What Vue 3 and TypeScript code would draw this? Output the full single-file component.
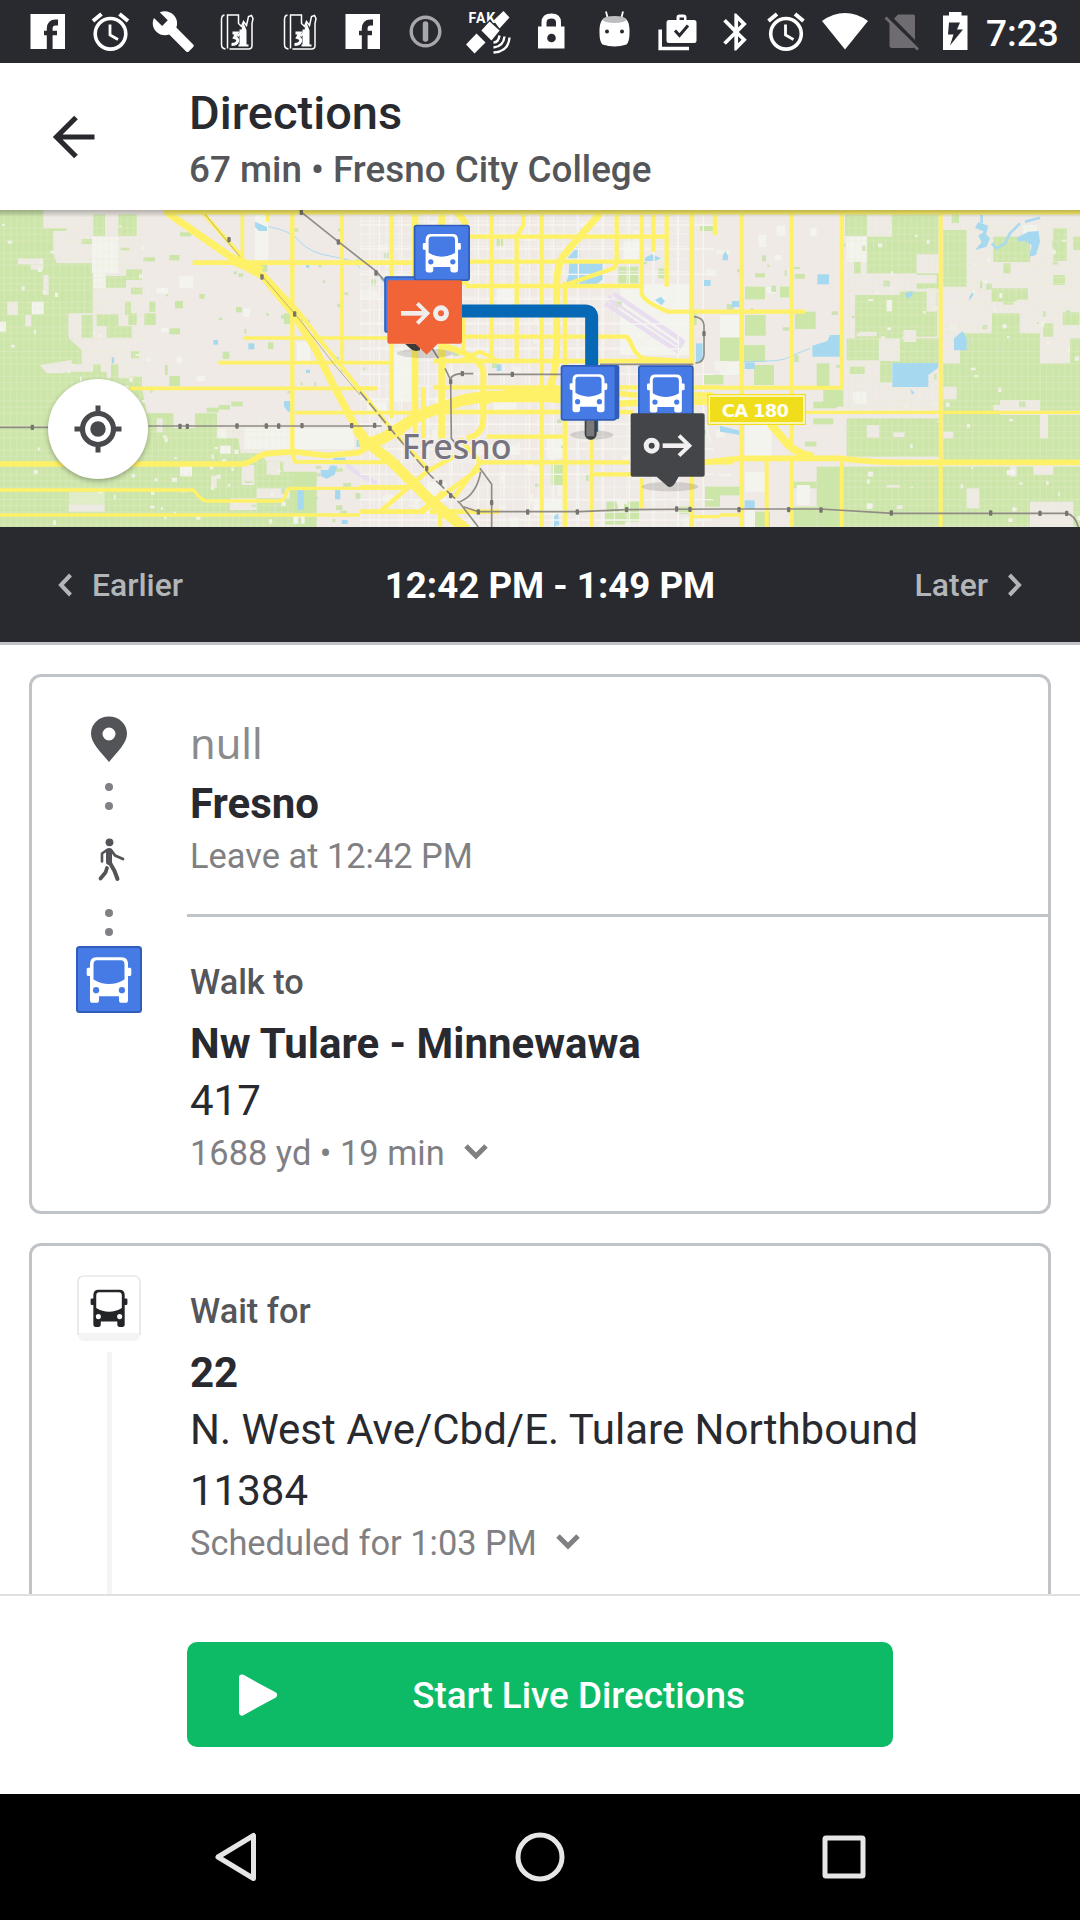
<script setup lang="ts">
type Box = [number, number, number, number]
type Road = { d: string; w: number }

const busPath =
  'M20 11H46Q51.5 11 52 17V21.5H54Q55.3 21.5 55.3 23V28Q55.3 29.5 53.7 29.5H52V53.5Q52 56 49.5 56H45.5Q43 56 43 53.5V49.5H23V53.5Q23 56 20.5 56H16.5Q14 56 14 53.5V29.5H12.3Q10.7 29.5 10.7 28V23Q10.7 21.5 12 21.5H14V17Q14.5 11 20 11ZM21 14Q17.7 14 17.5 18V33Q25 37.5 33 37.5Q41 37.5 48.5 33V18Q48.3 14 45 14ZM17 43.5a3.1 3.1 0 1 0 6.2 0a3.1 3.1 0 1 0-6.2 0ZM42.8 43.5a3.1 3.1 0 1 0 6.2 0a3.1 3.1 0 1 0-6.2 0Z'

// Farmland, three grid units per pixel
const fields: Box[] = [
  [280, 28, 35, 65], [355, 28, 55, 65], [245, 102, 32, 15], [430, 157, 35, 12], [318, 213, 60, 35], [378, 193, 48, 32],
  [393, 248, 34, 20], [375, 290, 18, 40], [290, 328, 65, 35], [320, 363, 75, 35], [385, 325, 25, 35], [448, 290, 18, 30],
  [433, 325, 34, 35], [245, 330, 33, 68], [508, 370, 32, 18], [525, 288, 24, 22], [598, 267, 16, 14], [708, 306, 18, 16],
  [393, 438, 24, 22], [508, 513, 32, 30], [388, 515, 38, 30], [280, 478, 22, 44], [333, 478, 22, 44], [495, 480, 8, 30],
  [668, 440, 20, 22], [804, 412, 16, 20], [620, 608, 36, 14], [656, 600, 34, 14], [694, 590, 34, 14], [852, 325, 28, 32],
  [778, 180, 24, 20], [540, 82, 34, 12], [585, 625, 66, 50], [508, 150, 30, 16], [362, 128, 26, 8],
  [1855, 185, 60, 50], [1990, 320, 100, 40], [1975, 190, 22, 30], [1652, 780, 40, 60], [1820, 890, 100, 60], [2115, 845, 45, 60],
  [2110, 510, 60, 28], [2100, 62, 40, 16], [1490, 100, 22, 26], [1815, 920, 60, 40], [2030, 905, 46, 22],
  [2235, 245, 60, 38], [2340, 245, 28, 32], [2235, 330, 62, 62], [2385, 320, 62, 52], [2160, 398, 64, 70], [2225, 420, 70, 50],
  [2262, 480, 60, 60], [2450, 475, 38, 70], [2440, 590, 70, 20], [2470, 555, 60, 50], [2535, 28, 66, 65], [2562, 170, 20, 35],
  [2675, 28, 140, 120], [2600, 95, 150, 110], [2750, 205, 70, 46], [2830, 75, 70, 170], [2980, 95, 110, 76], [3160, 70, 40, 98],
  [3220, 95, 20, 40], [2975, 250, 75, 40], [3050, 250, 34, 34], [2565, 270, 140, 130], [2700, 260, 112, 135], [2540, 400, 96, 66],
  [2640, 400, 176, 75], [2975, 325, 84, 75], [2880, 385, 240, 92], [2830, 475, 410, 110], [3210, 400, 30, 76], [3130, 355, 30, 40],
  [3160, 210, 35, 30], [2830, 630, 410, 135], [2540, 640, 280, 115], [2830, 570, 170, 60], [3120, 575, 120, 42], [2450, 785, 790, 180],
  [2380, 830, 70, 20], [2160, 845, 60, 26], [2260, 920, 50, 45], [2380, 905, 70, 60], [3188, 322, 50, 38], [2855, 28, 22, 26],
  [2440, 640, 60, 18], [2415, 710, 34, 14], [2550, 485, 44, 22], [3010, 175, 22, 30], [3010, 285, 30, 14], [2265, 205, 30, 12],
  [2385, 207, 30, 14], [2640, 470, 36, 62],
]
// Bare ground inside the farmland
const ground: Box[] = [
  [54, 160, 76, 18], [92, 178, 38, 16], [22, 290, 32, 40], [76, 330, 18, 34], [130, 210, 16, 60], [206, 328, 36, 62],
  [206, 898, 108, 22], [634, 812, 16, 38], [725, 780, 38, 60], [800, 770, 40, 40], [470, 640, 18, 42], [770, 850, 100, 30],
  [690, 880, 80, 35], [2630, 50, 46, 44], [2750, 150, 56, 44], [2630, 210, 180, 24], [2640, 400, 60, 68], [2710, 375, 38, 36],
  [2600, 660, 38, 38], [2830, 545, 40, 38], [2900, 325, 76, 52], [2680, 682, 34, 14], [2900, 850, 38, 60], [3030, 780, 20, 35],
  [3090, 890, 130, 76], [3100, 780, 60, 30], [2830, 680, 30, 20], [3120, 630, 24, 70], [2780, 250, 30, 70], [2980, 600, 40, 16],
  [2660, 840, 40, 8], [2740, 552, 80, 34], [2570, 380, 60, 14], [2690, 900, 18, 12],
]
const pale: Box[] = [
  [276, 96, 78, 108], [280, 205, 36, 44], [538, 212, 42, 38], [95, 290, 36, 38], [0, 350, 18, 30], [470, 248, 34, 18],
  [765, 28, 40, 150], [540, 780, 36, 34], [654, 672, 26, 28], [660, 722, 32, 24], [732, 670, 330, 62], [530, 455, 14, 20],
  [590, 512, 26, 16], [484, 368, 22, 14], [880, 930, 34, 26], [890, 410, 40, 70], [730, 310, 20, 26],
  [1290, 50, 20, 40], [1490, 250, 60, 60], [1870, 110, 50, 60], [1860, 240, 220, 210], [1180, 440, 60, 150], [1380, 720, 180, 30],
  [1480, 590, 70, 30], [1640, 700, 50, 60], [1750, 540, 60, 90], [1600, 880, 100, 50], [1280, 830, 60, 60], [2160, 330, 62, 66],
  [2160, 470, 60, 40], [2540, 95, 60, 75], [2275, 90, 24, 36], [2330, 62, 26, 30], [2300, 245, 32, 20], [2325, 150, 20, 16],
  [2235, 650, 80, 110], [2430, 70, 20, 24], [2235, 800, 60, 60], [2390, 840, 40, 60], [2560, 560, 40, 36], [2660, 285, 16, 34],
  [2600, 895, 18, 16], [3020, 795, 26, 16], [2235, 900, 30, 66], [3070, 60, 40, 36], [1100, 590, 60, 40], [1200, 250, 40, 20],
]
const water = [
  'M765 50l36 16v12h-24l-12-12z', 'M745 415h18v18h-18z', 'M640 405h14v14h-14z', 'M335 457h7v18h-7z', 'M852 588h20v32h-8l-12-16z',
  'M893 856h18v58h-18z', 'M1005 855h16v28h-16z', 'M962 795l22 0 8-14 20 2-8 26-24 12-18-8z', 'M1000 758h36v8h-36z',
  'M1708 172h104v48l-22 18h-92l8-30z', 'M1738 118v42h-36z', 'M1935 158l20-10 28 12-18 8-30 0z', 'M1965 285l18-10 12 14-10 12z',
  'M1490 478h14v20h-14z', 'M1660 935l14-10 4 34-16 6z', 'M2088 415h22v55h-22z', 'M2110 225h22v18h-22z', 'M1080 705l14-14v40h-14z',
  'M2168 152l8-14 8 14v14h-16z', 'M2452 208h35v30h-35z', 'M2196 288h26v18h-26z', 'M2437 422l45-14 8-18h32v65h-85z', 'M2234 472h30v20h-30z',
  'M2677 474h138l0 14-30 22 0 36H2677z', 'M2715 265l26-6-6 14-14 10z', 'M2862 400l26-22 12 22v36h-38z', 'M2160 662l62 16v12l-62-10z',
  'M2234 886h30v26h-30z', 'M2730 552l8 6 6 6-8 4z', 'M918 178h10v10h-10zM918 494h12v10h-12zM1002 456h14v10h-14z', 'M1070 705h14v20h-14z',
  'M1025 945h18v12h-18z', 'M2908 275l10-14 2 8-12 20z',
  'M3050 98L3085 80L3115 78L3120 110L3108 150L3088 155L3095 120L3075 108L3055 110Z', 'M2935 52L2965 62L2958 88L2970 100L2960 125L2925 135L2945 112L2935 92L2952 80L2925 68Z',
]
const roads: Road[] = [
  { w: 15, d: 'M490 21H3240' },
  { w: 22, d: 'M500 22L720 175L790 215L880 325L945 430L1000 540L1080 690' },
  { w: 32, d: 'M1070 670L1100 712L1170 765L1290 885L1400 975' },
  { w: 12, d: 'M610 25L725 155M790 205L900 325L960 405L1080 555L1180 680L1290 800' },
  { w: 32, d: 'M690 160L785 200' },
  { w: 13, d: 'M877 22V750' },
  { w: 11, d: 'M727 22V160M803 25V50M1026 30V470' },
  { w: 14, d: 'M578 173H1240' },
  { w: 11, d: 'M730 399H1170M655 473H1180M390 550H1130M885 623H1280' },
  { w: 17, d: 'M0 777H730C760 770 775 750 800 746L880 740L980 752L1080 742L1110 720' },
  { w: 12, d: 'M877 740L885 770L1080 772H1200' },
  { w: 10, d: 'M0 855H580C595 870 600 886 620 888H845C860 880 855 855 870 850H1230M0 930H1080M1080 920H1270' },
  { w: 13, d: 'M1175 30V640M1475 30V465M1625 30V965M1695 230V320M1695 240L1840 190Q1850 180 1850 165V30M1570 30V60L1550 95V465M1695 640V965M1925 30V265Q1930 290 2005 320H2415M2000 30V245M2145 30V90M1960 30V140M1925 820V910' },
  { w: 20, d: 'M1245 30V225M1245 400V640M1325 30V700M1370 22L1395 50V240' },
  { w: 13, d: 'M1395 95H2000M1395 170H1925M1395 243H1925M1390 318H1500M1380 395H1880C1900 410 1890 440 1930 460L2080 470M1300 468H2080M1300 547H2160' },
  { w: 21, d: 'M1800 25L1700 140Q1670 170 1670 240V440Q1665 520 1640 570' },
  { w: 34, d: 'M1080 725L1150 700L1260 630L1380 588Q1440 572 1520 575H1640L1780 548' },
  { w: 20, d: 'M1640 580L1800 600L1960 590L2160 590' },
  { w: 16, d: 'M1440 600L1520 560L1740 552L1900 570H2140' },
  { w: 13, d: 'M1270 621H1900M1270 547V700M1245 600V700M1460 695H1690M1440 772H1890M2110 772H2200M1775 700V808H1925M1695 240V965M1775 808V965' },
  { w: 18, d: 'M1320 420Q1440 450 1450 500V640Q1450 690 1400 700' },
  { w: 12, d: 'M1380 468L1440 440L1500 470M1390 320V440M1200 690L1240 640L1320 600M1080 550H1130' },
  { w: 14, d: 'M1140 920L1280 800L1370 750M1260 920L1440 790M1080 847H1230M1080 920H1270L1330 860M1290 920H1500M1380 700L1440 772L1360 880M1320 920V965' },
  { w: 15, d: 'M2075 22V965' },
  { w: 14, d: 'M2225 22V965' },
  { w: 12, d: 'M2375 22V740M2375 765V965M2525 28V548H2160M2525 770V965M2822 22V965M2300 765V965' },
  { w: 10, d: 'M2400 622H3240M2160 930H2225M2075 935H2160' },
  { w: 17, d: 'M2110 772L2225 760H2400L2520 760Q2620 772 2700 772H3240' },
  { w: 24, d: 'M2310 655L2365 720Q2390 745 2440 756' },
]
const streets: string[] = [
  'M1080 60H2140M1080 132H2140M1080 208H2140M1080 282H1840M1080 357H2070M1080 432H2070M1080 508H2140M1080 584H2140M1080 658H2140M1080 732H2140M1080 808H2140M1080 884H2140M1080 945H2140',
  'M1110 28V965M1138 28V965M1205 28V965M1285 28V965M1355 28V965M1435 28V965M1512 28V965M1588 28V965M1660 28V965M1735 28V965M1810 28V965M1888 28V240M1888 460V965M1962 28V240M1962 460V965M2035 28V965M2110 28V965',
]
const rails: string[] = [
  'M0 667H280M445 663H1145', 'M902 20L1015 110L1130 200L1160 235', 'M1290 420L1315 460M1335 490L1352 525L1354 700L1390 745M1440 790L1475 838V966',
  'M1350 530Q1350 508 1385 506H1420M1464 508H1690M1800 478H2080', 'M1380 895L1435 966', 'M1380 890Q1430 870 1442 800',
  'M1390 905L1435 920H1740L1880 914L2160 912H2460L2680 925H3200Q3225 930 3235 966', 'M2082 335Q2110 338 2112 360V450Q2110 474 2086 474',
]
const stations: [number, number][] = [
  [97, 667], [540, 664], [562, 664], [711, 663], [799, 663], [836, 663], [906, 662], [1055, 662], [904, 22], [1015, 111], [687, 104],
  [786, 216], [884, 327], [1128, 204], [1352, 530], [1387, 506], [1537, 508], [1124, 661], [1170, 670], [1280, 790], [1322, 832],
  [1352, 872], [1435, 921], [1583, 921], [1732, 921], [1880, 914], [2030, 912], [2070, 913], [2217, 914], [2366, 914], [2463, 915],
  [2674, 924], [2972, 924], [3120, 925], [3200, 925], [2112, 386], [1475, 893],
]

// Scattered parks and lots, placed by a fixed-seed generator
function scatter(count: number, seed: number, area: Box, size: number): Box[] {
  let s = seed
  const next = () => ((s = (s * 16807) % 2147483647) / 2147483647)
  return Array.from({ length: count }, () => [
    Math.round(area[0] + next() * area[2]),
    Math.round(area[1] + next() * area[3]),
    Math.round(5 + next() * size),
    Math.round(5 + next() * size),
  ] as Box)
}
const lots: Box[] = [...scatter(45, 71, [0, 40, 440, 920], 10), ...scatter(30, 29, [450, 690, 400, 260], 10), ...scatter(50, 113, [2600, 80, 640, 860], 10), ...scatter(90, 17, [1080, 40, 1080, 900], 34)]
const parks: Box[] = [...scatter(24, 7, [450, 40, 620, 560], 10), ...scatter(45, 41, [2180, 100, 1040, 500], 16), ...scatter(22, 57, [1090, 40, 1050, 900], 16), ...scatter(22, 91, [730, 780, 340, 170], 18)]
</script>

<template>
  <div class="screen">
    <header class="status">
      <svg class="cell" viewBox="-31.5 -31.5 63 63"><use href="#i-fb" /></svg>
      <svg class="cell" viewBox="-31.5 -31.5 63 63"><use href="#i-alarm" /></svg>
      <svg class="cell" viewBox="-31.5 -31.5 63 63">
        <path transform="translate(-22.5 -22.3) scale(1.86)" fill="#fff" d="M22.7 19l-9.1-9.1c.9-2.3.4-5-1.5-6.9-2-2-5-2.4-7.4-1.3L9 6 6 9 1.6 4.7C.4 7.1.9 10.1 2.9 12.1c1.9 1.9 4.6 2.4 6.9 1.5l9.1 9.1c.4.4 1 .4 1.4 0l2.3-2.3c.5-.4.5-1.1.1-1.4z" />
      </svg>
      <svg class="cell" viewBox="-31.5 -31.5 63 63"><use href="#i-book" /></svg>
      <svg class="cell" viewBox="-31.5 -31.5 63 63"><use href="#i-book" /></svg>
      <svg class="cell" viewBox="-31.5 -31.5 63 63"><use href="#i-fb" /></svg>
      <svg class="cell" viewBox="-31.5 -31.5 63 63" fill="none" stroke="#a8a8ab">
        <circle r="14.3" stroke-width="3.4" /><path d="M0 -7.5V7.5" stroke-width="5.5" stroke-linecap="round" />
      </svg>
      <svg class="cell" viewBox="-31.5 -31.5 63 63">
        <text x="-20" y="-8.500" class="fake">FAK</text>
        <g fill="#fff">
          <path d="M5 -11L15 -20.500L21 -14L11 -3Z" /><path d="M-8 -1L1 -11L12 -1L3 10Z" /><path d="M-22.500 13L-12 2L-3 11L-14 22Z" />
          <path d="M-8 -1L1 -11L12 -1L3 10Z" fill="none" stroke="#292a2f" stroke-width="1.200" />
        </g>
        <path d="M5 11Q10 11 11 4M5 16Q15 15 16 5M5 21Q20 20 21 6" fill="none" stroke="#fff" stroke-width="2.400" />
      </svg>
      <svg class="cell" viewBox="-31.5 -31.5 63 63">
        <path d="M-7.500 -4V-9Q-7.500 -15.500 0 -15.500Q7 -15.500 7 -9V-4" fill="none" stroke="#fff" stroke-width="5" />
        <rect x="-13.500" y="-5" width="26.500" height="22" fill="#fff" /><circle cy="6.500" r="4.300" fill="#292a2f" />
      </svg>
      <svg class="cell" viewBox="-31.5 -31.5 63 63">
        <path d="M-8.500 -20L-6.500 -12M8.500 -20L6.500 -12" stroke="#fff" stroke-width="1.800" />
        <path d="M-12 -12H12Q15.500 -8 15 2Q15 10 12 13Q0 17 -12 13Q-15 10 -15 2Q-15.500 -8 -12 -12Z" fill="#fff" />
        <ellipse cy="-12" rx="12" ry="3.500" fill="#bdbdbf" /><circle cx="-7.500" cy="0" r="2" fill="#292a2f" /><circle cx="7.500" cy="0" r="2" fill="#292a2f" />
      </svg>
      <svg class="cell" viewBox="-31.5 -31.5 63 63">
        <path d="M-17.300 -2V17H11.500" fill="none" stroke="#fff" stroke-width="3.600" />
        <path d="M-9 -11.500H-1V-14Q-1 -17 2 -17H6Q9 -17 9 -14V-11.500H16.500Q19 -11.500 19 -9V9Q19 11.500 16.500 11.500H-8.500Q-11 11.500 -11 9V-9Q-11 -11.500 -9 -11.500ZM2 -11.500H6.500V-14H2Z" fill="#fff" fill-rule="evenodd" />
        <path d="M-2.500 -1L2 4L10.500 -6" fill="none" stroke="#292a2f" stroke-width="3" />
      </svg>
      <svg class="cell c52" viewBox="-26 -31.5 52 63">
        <path transform="translate(-21 -21.800) scale(1.850)" fill="#fff" d="M17.71 7.71L12 2h-1v7.59L6.41 5 5 6.41 10.59 12 5 17.59 6.41 19 11 14.41V22h1l5.71-5.71-4.3-4.29 4.3-4.29zM13 5.83l1.88 1.88L13 9.59V5.83zm1.88 10.460L13 18.170v-3.760l1.880 1.880z" />
      </svg>
      <svg class="cell c50" viewBox="-25 -31.5 50 63"><use href="#i-alarm" /></svg>
      <svg class="cell c68" viewBox="-34 -31.5 68 63"><path d="M0 18L-23 -10.500Q-12 -18.500 0 -18.500Q12 -18.500 23 -10.500Z" fill="#fff" /></svg>
      <svg class="cell c46" viewBox="-23 -31.5 46 63">
        <path d="M-4 -17H11Q13 -17 13 -15V14Q13 16.500 11 16.500H-10Q-12.500 16.500 -12.500 14V-8Z" fill="#6e6c71" />
        <path d="M-14 -16L18 16.500" stroke="#292a2f" stroke-width="4" /><path d="M-16.500 -14L16 18" stroke="#6e6c71" stroke-width="3" />
      </svg>
      <svg class="cell c60" viewBox="-30 -31.5 60 63">
        <path d="M-6 -19.500H6.500V-16H12.500V18.500H-12V-16H-6Z" fill="#fff" /><path d="M-6 -9H5L2 -2H8L-5 14L-1.500 3H-7Z" fill="#292a2f" />
      </svg>
      <span class="clock">7:23</span>
    </header>

    <svg class="defs" width="0" height="0">
      <defs>
        <g id="i-fb"><rect x="-17" y="-17.500" width="34.500" height="35" fill="#fff" /><path d="M10.500 -9H8Q2.200 -9 2.200 -3V17.500" fill="none" stroke="#292a2f" stroke-width="5.800" /><path d="M-3.500 1.500H9.500" stroke="#292a2f" stroke-width="4.500" /></g>
        <g id="i-alarm" fill="none" stroke="#fff"><circle cy="2.300" r="15.300" stroke-width="3.600" /><path d="M-.500 -7V3.500L7.500 8" stroke-width="2.800" /><path d="M-17.500 -10.500L-9 -17.500M17.500 -10.500L9 -17.500" stroke-width="4" /></g>
        <g id="i-book" fill="none" stroke="#fff" stroke-width="1.500">
          <path d="M-12 -16.500Q-15 -16 -15 -12V13Q-15 17 -11 17.500M-9 17V-16.500H2V-8L5 -5L7 -10L10 -6L12 -15L15 -16L16.500 -13L15.500 -8V14Q15.500 17.500 12 17.500H-7" />
          <path d="M4 13.500V-1H6L7 -6L9 -1V13.500Z" fill="#fff" stroke-width="2" /><path d="M2 14H12M1 5L5 0" stroke-width="2" /><path d="M-4 1.500H.500L-2 6Q2 7 1 10T-5 13" stroke-width="3" />
        </g>
        <g id="bus"><rect x="1" y="1" width="64" height="64" rx="2.500" fill="#467ae4" stroke="#315dba" stroke-width="2" /><path :d="busPath" fill="#fff" fill-rule="evenodd" /></g>
      </defs>
    </svg>

    <section class="toolbar">
      <div class="back">
        <svg width="44" height="44" viewBox="0 0 44 44" fill="none" stroke="#292a2f" stroke-width="5.200"><path d="M24 2.500L4.500 22L24 41.500M5 22H42.500" /></svg>
      </div>
      <div class="heading">
        <h1>Directions</h1>
        <p>67 min • Fresno City College</p>
      </div>
    </section>

    <section class="map">
      <svg class="canvas" viewBox="0 15 3240 951" preserveAspectRatio="none">
        <defs>
          <pattern id="plots" width="74" height="74" patternUnits="userSpaceOnUse"><path d="M12 0V74M31 0V74M50 0V74M68 0V74M0 14H74M0 33H74M0 70H74" stroke="#e5efcf" stroke-width="1.300" /></pattern>
          <pattern id="blocks" width="38" height="38" patternUnits="userSpaceOnUse"><path d="M0 10H38M19 0V38" stroke="#f5f3f0" stroke-width="2.500" /></pattern>
          <linearGradient id="shade" x1="0" y1="0" x2="0" y2="1"><stop offset="0" stop-color="#000" stop-opacity=".250" /><stop offset="1" stop-color="#000" stop-opacity="0" /></linearGradient>
        </defs>
        <rect y="15" width="3240" height="951" fill="#efeae6" />
        <g fill="#cce5a8">
          <path d="M0 15H130V70H200V78H160V145L170 175H278V325H206V400L245 435V478H205L170 500H320V520H425V545L440 625H520V670H650V700H715L722 745H780L800 770H850V800H950V966H0Z" />
          <rect v-for="(b, i) in fields" :key="i" :x="b[0]" :y="b[1]" :width="b[2]" :height="b[3]" />
        </g>
        <rect x="206" y="860" width="108" height="38" fill="#dfedc6" />
        <g fill="#efeae6">
          <path d="M120 480L215 465V495L190 505H140Z" />
          <rect v-for="(b, i) in ground" :key="i" :x="b[0]" :y="b[1]" :width="b[2]" :height="b[3]" />
        </g>
        <g fill="#f4f4ef"><rect v-for="(b, i) in pale" :key="i" :x="b[0]" :y="b[1]" :width="b[2]" :height="b[3]" /></g>
        <g fill="#f2f2ea"><rect v-for="(b, i) in lots" :key="i" :x="b[0]" :y="b[1]" :width="b[2]" :height="b[3]" /></g>
        <g fill="#cde3b3"><rect v-for="(b, i) in parks" :key="i" :x="b[0]" :y="b[1]" :width="b[2]" :height="b[3]" /></g>
        <rect x="0" y="15" width="440" height="951" fill="url(#plots)" />
        <rect x="440" y="640" width="440" height="326" fill="url(#plots)" />
        <rect x="2530" y="15" width="710" height="951" fill="url(#plots)" />
        <rect x="1080" y="15" width="1000" height="951" fill="url(#blocks)" />
        <g fill="#a6d9f0"><path v-for="d in water" :key="d" :d="d" /></g>
        <g fill="none" stroke="#a9daf0">
          <path d="M805 65Q870 75 900 110T1000 155T1080 190" stroke-width="3" /><path d="M1130 205L1158 235M1550 395V465" stroke-width="7" />
          <path d="M2975 115L2990 130L3015 115L3030 85L3060 55M3075 50L3120 38M2945 30V55" stroke-width="8" />
          <path d="M2220 470Q2340 470 2360 460T2430 430" stroke-width="3" />
        </g>
        <g fill="none" stroke="#e9deef" stroke-width="14"><path d="M1840 265L2050 410M1815 295L2035 440M1825 275L1845 300M2050 405L2030 440" /><path d="M1828 282L2040 425" stroke-width="8" /><path d="M1080 810L1130 835M1040 780L1080 810" /></g>
        <g fill="none" stroke="#f7f5f1" stroke-width="4"><path v-for="d in streets" :key="d" :d="d" /></g>
        <g fill="none" stroke="#fef168" stroke-linejoin="round"><path v-for="r in roads" :key="r.d" :d="r.d" :stroke-width="r.w" /></g>
        <g fill="none" stroke="#908c85">
          <path v-for="d in rails" :key="d" :d="d" stroke-width="5" />
          <path d="M615 28L720 155M780 205L900 345L1000 475L1080 570" stroke-width="2.500" stroke="#b5a566" />
          <path d="M1080 560L1170 670L1290 810L1380 895" stroke-width="5" stroke-dasharray="34 10" />
        </g>
        <g fill="#77746f"><rect v-for="(p, i) in stations" :key="i" :x="p[0] - 5" :y="p[1] - 8" width="10" height="16" rx="3" /></g>
        <text x="1205" y="763" class="city">Fresno</text>
        <g><rect x="2122" y="567" width="296" height="93" fill="#f0dd1b" /><rect x="2128" y="573" width="284" height="81" fill="#f0dd1b" stroke="#fff" stroke-width="4" /><text x="2165" y="635" textLength="202" class="shield">CA 180</text></g>
        <rect y="15" width="3240" height="22" fill="url(#shade)" />

        <g fill="#000" opacity=".120"><ellipse cx="1275" cy="445" rx="85" ry="14" /><ellipse cx="1775" cy="690" rx="65" ry="14" /><ellipse cx="2010" cy="845" rx="85" ry="14" /></g>
        <path d="M1215 416h45v20q-20 6-30-6z" fill="#3c3a38" />
        <path d="M1370 318H1755Q1775 318 1775 338V680" fill="none" stroke="#0768b6" stroke-width="39" />
        <rect x="1754" y="630" width="36" height="74" rx="17" fill="#3c3e42" /><rect x="1759" y="640" width="24" height="54" fill="#77797b" />
        <rect x="1155" y="216" width="168" height="165" rx="7" fill="#467ae4" stroke="#315dba" stroke-width="5" />
        <use href="#bus" transform="translate(1241 59) scale(2.560)" />
        <rect x="1694" y="480" width="164" height="163" rx="7" fill="#315dba" />
        <use href="#bus" transform="translate(1682 480) scale(2.530)" />
        <use href="#bus" transform="translate(1914 481) scale(2.530)" />
        <path d="M1168 226H1380Q1386 226 1386 232V410Q1386 416 1380 416H1313L1280 449L1246 416H1168Q1162 416 1162 410V232Q1162 226 1168 226Z" fill="#f06437" />
        <g fill="none" stroke="#f1edec"><path d="M1203 325H1280" stroke-width="14" /><path d="M1252 295L1282 325L1252 355" stroke-width="12" /><circle cx="1323" cy="325" r="16.500" stroke-width="15" /></g>
        <path d="M1898 625H2108Q2114 625 2114 631V809Q2114 815 2108 815H2036L2024 836Q2010 856 1996 838L1970 815H1898Q1892 815 1892 809V631Q1892 625 1898 625Z" fill="#434549" />
        <g fill="none" stroke="#f1efef"><path d="M1988 722H2065" stroke-width="14" /><path d="M2037 692L2068 722L2037 752" stroke-width="12" /><circle cx="1955" cy="722" r="16.500" stroke-width="15" /></g>
      </svg>
      <div class="locate">
        <svg width="48" height="48" viewBox="-24 -24 48 48" fill="none" stroke="#48494d"><circle r="15.500" stroke-width="5.200" /><circle r="7.700" fill="#48494d" stroke="none" /><path d="M0 -23.500V-16M0 16V23.500M-23.500 0H-16M16 0H23.500" stroke-width="5" /></svg>
      </div>
    </section>

    <nav class="times">
      <div class="shift"><svg width="16" height="24" viewBox="0 0 16 24"><path d="M13.500 2L4 12L13.500 22" /></svg><span>Earlier</span></div>
      <strong>12:42 PM - 1:49 PM</strong>
      <div class="shift later"><span>Later</span><svg width="16" height="24" viewBox="0 0 16 24"><path d="M2.500 2L12 12L2.500 22" /></svg></div>
    </nav>

    <main class="list">
      <article class="card first">
        <div class="rail">
          <svg class="pin" width="38" height="46" viewBox="0 0 38 46"><path d="M19 .500C9 .500 1 8 1 17.500C1 27 10 35 19 46C28 35 37 27 37 17.500C37 8 29 .500 19 .500ZM19 11.500A6.500 6.500 0 1 1 19 24.500A6.500 6.500 0 1 1 19 11.500Z" fill="#535457" fill-rule="evenodd" /></svg>
          <div class="dots"><i /><i /></div>
          <svg class="walker" width="28" height="44" viewBox="0 0 28 44" fill="none" stroke="#535457" stroke-linecap="round" stroke-linejoin="round">
            <circle cx="12.500" cy="4.300" r="3.900" fill="#535457" stroke="none" /><path d="M12 13V24" stroke-width="6" /><path d="M10 12L5 15.500V23.500" stroke-width="2.600" /><path d="M14 12L18 17.500L26 21" stroke-width="2.800" /><path d="M13 25L17.500 33L20.500 41" stroke-width="4" /><path d="M10 30L8.500 34.500L3.500 40.500" stroke-width="3.800" />
          </svg>
          <div class="dots second"><i /><i /></div>
          <svg class="stop" width="66" height="67" viewBox="0 0 66 66" preserveAspectRatio="none"><use href="#bus" /></svg>
        </div>
        <div class="body">
          <div class="step origin">
            <p class="unnamed">null</p>
            <p class="name after">Fresno</p>
            <p class="meta tight">Leave at 12:42 PM</p>
          </div>
          <div class="step">
            <p class="label">Walk to</p>
            <p class="name">Nw Tulare - Minnewawa</p>
            <p class="sub">417</p>
            <p class="meta">1688 yd • 19 min<svg width="24" height="18" viewBox="0 0 24 18"><path d="M2 3L12 13L22 3" /></svg></p>
          </div>
        </div>
      </article>

      <article class="card">
        <div class="rail">
          <svg class="ride" width="64" height="68" viewBox="0 0 64 68">
            <rect x="1" y="1" width="62" height="65" rx="6" fill="#f4f4f4" /><path d="M1 58V7Q1 1 7 1H57Q63 1 63 7V58Z" fill="#fff" /><path d="M1 60V7Q1 1 7 1H57Q63 1 63 7V60" fill="none" stroke="#dcdcde" stroke-width="1.200" />
            <path :d="busPath" transform="translate(4.800 5.700) scale(.825)" fill="#242528" fill-rule="evenodd" />
          </svg>
          <div class="track" />
        </div>
        <div class="body">
          <div class="step">
            <p class="label">Wait for</p>
            <p class="name">22</p>
            <p class="sub">N. West Ave/Cbd/E. Tulare Northbound</p>
            <p class="sub spaced">11384</p>
            <p class="meta">Scheduled for 1:03 PM<svg width="24" height="18" viewBox="0 0 24 18"><path d="M2 3L12 13L22 3" /></svg></p>
          </div>
        </div>
      </article>
    </main>

    <footer class="action">
      <button type="button">
        <svg width="40" height="44" viewBox="0 0 40 44"><path d="M4 4.500L36 22L4 39.500Z" fill="#fff" stroke="#fff" stroke-width="6" stroke-linejoin="round" /></svg>
        <span>Start Live Directions</span>
      </button>
    </footer>

    <div class="system">
      <svg width="44" height="52" viewBox="0 0 44 52"><path d="M39.500 4.500V47.500L4 26Z" /></svg>
      <svg width="52" height="52" viewBox="0 0 52 52"><circle cx="26" cy="26" r="22" /></svg>
      <svg width="46" height="46" viewBox="0 0 46 46"><rect x="4" y="4" width="38" height="38" rx="1" /></svg>
    </div>
  </div>
</template>

<style>
body { margin: 0; background: #fff; }
</style>

<style scoped>
.screen { width: 1080px; height: 1920px; display: flex; flex-direction: column; overflow: hidden; background: #fff; font-family: Roboto, "Liberation Sans", sans-serif; color: #292a2f; }
p, h1 { margin: 0; white-space: nowrap; }
svg { display: block; flex: none; }
.defs { position: absolute; }
.status { height: 63px; flex: none; box-sizing: border-box; padding-left: 16px; display: flex; align-items: center; background: #292a2f; }
.cell { width: 63px; height: 63px; }
.c52 { width: 52px; }
.c50 { width: 50px; }
.c68 { width: 68px; }
.c46 { width: 46px; }
.c60 { width: 60px; }
.fake { font: 700 14px Roboto, sans-serif; fill: #fff; letter-spacing: 1px; }
.clock { margin-left: 1px; padding-top: 3px; font-size: 37px; font-weight: 500; color: #fff; }
.toolbar { height: 147px; flex: none; display: flex; }
.back { width: 189px; display: flex; align-items: center; box-sizing: border-box; padding-left: 52px; }
.heading h1 { padding-top: 22px; font-size: 47px; line-height: 56px; font-weight: 500; }
.heading p { padding-top: 1px; font-size: 36.8px; line-height: 56px; font-weight: 500; color: #555659; }
.map { position: relative; height: 317px; flex: none; }
.canvas { width: 1080px; height: 317px; }
.city { font: 500 102px "Noto Sans", sans-serif; fill: #77727f; stroke: #f4f2ee; stroke-width: 6px; paint-order: stroke; }
.shield { font: 700 54px "DejaVu Sans", sans-serif; fill: #fffef2; }
.locate { position: absolute; left: 48px; top: 169px; width: 100px; height: 100px; border-radius: 50%; background: #fff; display: flex; align-items: center; justify-content: center; box-shadow: 0 2px 5px rgba(0, 0, 0, .3); }
.times { height: 115px; flex: none; border-bottom: 3px solid #c1c3c8; background: #292a2f; display: grid; grid-template-columns: 329px 442px 309px; align-items: center; }
.times strong { text-align: center; font-size: 36.7px; line-height: 40px; font-weight: 700; color: #fff; white-space: nowrap; padding-top: 2px; }
.shift { display: flex; align-items: center; padding-left: 57px; font-size: 31.9px; font-weight: 500; color: #b3b6b9; }
.shift span { padding: 1px 0 0 19px; }
.shift svg { fill: none; stroke: #b3b6b9; stroke-width: 4; }
.later { justify-content: flex-end; padding: 0 57px 0 0; }
.later span { padding: 1px 19px 0 0; }
.list { height: 949px; flex: none; box-sizing: border-box; padding: 29px 29px 0 29px; overflow: hidden; }
.card { box-sizing: border-box; height: 540px; border: 3px solid #c0c4c8; border-radius: 12px; display: flex; margin-bottom: 29px; }
.rail { width: 154px; flex: none; display: flex; flex-direction: column; align-items: center; }
.body { flex: 1; }
.pin { margin-top: 39px; }
.dots { display: flex; flex-direction: column; gap: 11px; margin-top: 21px; }
.dots i { width: 8px; height: 8px; border-radius: 50%; background: #808184; }
.walker { margin: 28px 0 0 3px; }
.dots.second { margin-top: 27px; }
.stop { margin-top: 10px; }
.step { padding-left: 4px; }
.origin { height: 240px; box-sizing: border-box; padding-top: 38px; border-bottom: 3px solid #c0c4c8; margin-left: 1px; padding-left: 3px; }
.unnamed { font: 41.5px/56px "Noto Sans", sans-serif; color: #8b8b8d; }
.name { margin-top: 10px; font-size: 42px; line-height: 60px; font-weight: 700; }
.after { margin-top: 3px; line-height: 60px; }
.label { padding-top: 43px; font-size: 34.3px; line-height: 44px; font-weight: 500; color: #555659; }
.sub { font-size: 42px; line-height: 54px; }
.spaced { margin-top: 7px; }
.meta { display: flex; align-items: center; font-size: 34.4px; line-height: 50px; color: #808083; }
.tight { line-height: 44px; }
.meta svg { margin: 0 0 3px 19px; fill: none; stroke: #808083; stroke-width: 5; }
.ride { margin-top: 29px; }
.track { width: 5px; flex: 1; margin-top: 9px; background: #f4f4f5; }
.action { height: 200px; flex: none; box-sizing: border-box; border-top: 2px solid #dfe0e2; padding-top: 46px; background: #fff; display: flex; justify-content: center; align-items: flex-start; }
button { width: 706px; height: 105px; border: 0; border-radius: 10px; padding: 0; background: #0dbb67; display: flex; align-items: center; font: 500 36.8px Roboto, sans-serif; color: #fff; }
button svg { margin-left: 51px; }
button span { flex: 1; text-align: center; padding: 2px 14px 0 0; }
.system { flex: 1; background: #000; display: flex; align-items: center; justify-content: space-between; padding: 0 213px 0 214px; }
.system svg { fill: none; stroke: #e6e6e6; stroke-width: 5; stroke-linejoin: round; }
</style>
